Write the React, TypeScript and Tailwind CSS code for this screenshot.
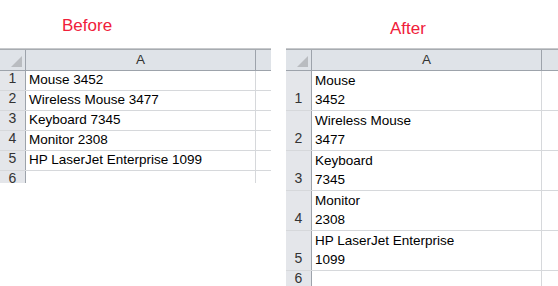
const before = [
  ['Mouse 3452'],
  ['Wireless Mouse 3477'],
  ['Keyboard 7345'],
  ['Monitor 2308'],
  ['HP LaserJet Enterprise 1099'],
]

const after = [
  ['Mouse', '3452'],
  ['Wireless Mouse', '3477'],
  ['Keyboard', '7345'],
  ['Monitor', '2308'],
  ['HP LaserJet Enterprise', '1099'],
]

const Corner = () => (
  <div className="relative h-full border-r border-[#9da3ab] bg-[#dfe3e8]">
    <svg className="absolute bottom-[3px] right-[3px]" width="11" height="11">
      <polygon points="11,0 11,11 0,11" fill="#b9bcc0" />
    </svg>
  </div>
)

const Sheet = ({
  rows,
  rowH,
  numW,
  colW,
}: {
  rows: string[][]
  rowH: string
  numW: string
  colW: string
}) => {
  return (
    <div className="flex shrink-0 flex-col">
      <div className="h-[2px] shrink-0 border-t border-[#c7c9cc] bg-[#a7abb0]" />
      <div className="flex h-[21px] shrink-0 border-b border-[#9da3ab] bg-[#dfe3e8]">
        <div className={numW}>
          <Corner />
        </div>
        <div
          className={`${colW} flex items-center justify-center border-r border-[#9da3ab] text-[#333]`}
        >
          A
        </div>
        <div className="flex-1" />
      </div>
      {[...rows, []].map((lines, i) => (
        <div
          key={i}
          className={`flex shrink-0 ${i < rows.length ? rowH : 'h-[20px]'} border-b border-[#d6d8db]`}
        >
          <div
            className={`${numW} flex items-end justify-center border-r border-[#9da3ab] bg-[#e4e6ea] pb-[1px] text-[14px] text-[#333]`}
          >
            {i + 1}
          </div>
          <div
            className={`${colW} flex flex-col justify-end border-r border-[#d6d8db] pb-[1px] pl-[3px] text-black`}
          >
            {lines.map((t, j) => (
              <div key={j} className="h-[20px] leading-[19px]">
                {t}
              </div>
            ))}
          </div>
          <div className="flex-1" />
        </div>
      ))}
    </div>
  )
}

export default function App() {
  return (
    <div
      className="flex h-[286px] w-[558px] gap-[15px] overflow-hidden bg-white text-[13.5px]"
      style={{ fontFamily: '"Liberation Sans", Arial, sans-serif' }}
    >
      <div className="flex h-[183px] w-[271px] shrink-0 flex-col overflow-hidden">
        <div className="h-[48px] shrink-0 pl-[62px] pt-[13px] text-[17px] text-[#f0203a]">
          Before
        </div>
        <Sheet rows={before} rowH="h-[20px]" numW="w-[26px]" colW="w-[230px]" />
      </div>
      <div className="flex h-[286px] flex-1 flex-col overflow-hidden">
        <div className="h-[48px] shrink-0 pl-[104px] pt-[16px] text-[17px] text-[#f0203a]">
          After
        </div>
        <Sheet rows={after} rowH="h-[40px]" numW="w-[26px]" colW="w-[230px]" />
      </div>
    </div>
  )
}
